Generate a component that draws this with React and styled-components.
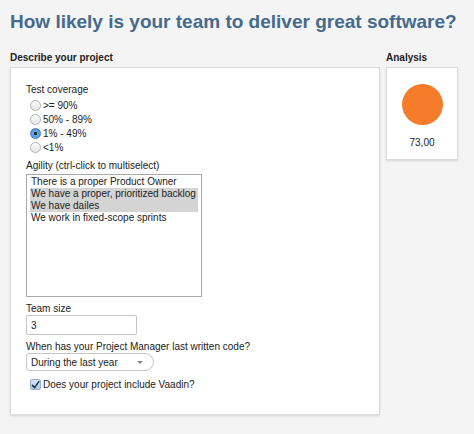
import React, { useState } from "react";
import styled, { createGlobalStyle } from "styled-components";

const GlobalStyle = createGlobalStyle`
  html, body {
    margin: 0;
    padding: 0;
    background: #f4f4f4;
    font-family: "Liberation Sans", Arial, Helvetica, sans-serif;
    color: #222;
  }
`;

const coverageOptions = [">= 90%", "50% - 89%", "1% - 49%", "<1%"];
const agilityOptions = [
  "There is a proper Product Owner",
  "We have a proper, prioritized backlog",
  "We have dailes",
  "We work in fixed-scope sprints",
];

const App = () => {
  const [coverage, setCoverage] = useState("1% - 49%");
  const [agility, setAgility] = useState([1, 2]);
  const [vaadin, setVaadin] = useState(true);

  const toggleAgility = (i) =>
    setAgility((prev) =>
      prev.includes(i) ? prev.filter((x) => x !== i) : [...prev, i]
    );

  return (
    <Page>
      <GlobalStyle />
      <Title>How likely is your team to deliver great software?</Title>
      <Columns>
        <FormColumn>
          <SectionTitle>Describe your project</SectionTitle>
          <Panel>
            <Field>
              <Label>Test coverage</Label>
              <RadioGroup>
                {coverageOptions.map((opt) => (
                  <RadioRow key={opt}>
                    <Radio
                      checked={coverage === opt}
                      onClick={() => setCoverage(opt)}
                    />
                    {opt}
                  </RadioRow>
                ))}
              </RadioGroup>
            </Field>

            <Field>
              <Label>Agility (ctrl-click to multiselect)</Label>
              <ListBox>
                {agilityOptions.map((opt, i) => (
                  <ListItem
                    key={opt}
                    $selected={agility.includes(i)}
                    onClick={() => toggleAgility(i)}
                  >
                    {opt}
                  </ListItem>
                ))}
              </ListBox>
            </Field>

            <Field>
              <Label $tight>Team size</Label>
              <TextInput defaultValue="3" />
            </Field>

            <Field>
              <Label $tight>When has your Project Manager last written code?</Label>
              <Combo>
                <span>During the last year</span>
                <Caret />
              </Combo>
            </Field>

            <CheckRow onClick={() => setVaadin(!vaadin)}>
              <CheckBox>
                {vaadin && (
                  <svg width="12" height="12" viewBox="0 0 12 12">
                    <path
                      d="M2 6.5 L4.8 9.5 L10.5 1.5"
                      fill="none"
                      stroke="#1f3550"
                      strokeWidth="2"
                      strokeLinecap="round"
                      strokeLinejoin="round"
                    />
                  </svg>
                )}
              </CheckBox>
              Does your project include Vaadin?
            </CheckRow>
          </Panel>
        </FormColumn>

        <AnalysisColumn>
          <SectionTitle>Analysis</SectionTitle>
          <AnalysisPanel>
            <Dot />
            <Score>73,00</Score>
          </AnalysisPanel>
        </AnalysisColumn>
      </Columns>
    </Page>
  );
};

export default App;

const Page = styled.div`
  padding: 9px 10px 19px 10px;
`;

const Title = styled.h1`
  margin: 0 0 17px 0;
  font-size: 19px;
  font-weight: bold;
  color: #466a8c;
  white-space: nowrap;
  line-height: 26px;
`;

const Columns = styled.div`
  display: flex;
  gap: 6px;
  align-items: flex-start;
`;

const FormColumn = styled.div`
  width: 370px;
`;

const AnalysisColumn = styled.div`
  width: 72px;
`;

const SectionTitle = styled.div`
  font-size: 10px;
  font-weight: bold;
  line-height: 12px;
  margin-bottom: 3px;
`;

const Panel = styled.div`
  background: #fff;
  border: 1px solid #dcdcdc;
  box-shadow: 0 1px 2px rgba(0, 0, 0, 0.12);
  padding: 16px 15px 22px 15px;
  height: 348px;
  box-sizing: border-box;
  display: flex;
  flex-direction: column;
  gap: 6px;
`;

const Field = styled.div`
  display: flex;
  flex-direction: column;
`;

const Label = styled.div`
  font-size: 10px;
  line-height: 12px;
  margin-bottom: ${(p) => (p.$tight ? "0" : "2px")};
`;

const RadioGroup = styled.div`
  display: flex;
  flex-direction: column;
  padding-left: 4px;
`;

const RadioRow = styled.label`
  display: flex;
  align-items: center;
  gap: 2px;
  font-size: 10px;
  height: 14px;
  cursor: pointer;
`;

const Radio = styled.span`
  width: 11px;
  height: 11px;
  border-radius: 50%;
  box-sizing: border-box;
  border: 1px solid #b4b4b4;
  background: ${(p) =>
    p.checked
      ? "radial-gradient(circle, #1c2f45 0 1.6px, #6fa8e6 2px, #3f86d8 100%)"
      : "linear-gradient(#fbfbfb, #e6e6e6)"};
  border-color: ${(p) => (p.checked ? "#4a7fbf" : "#b4b4b4")};
`;

const ListBox = styled.div`
  width: 176px;
  height: 123px;
  box-sizing: border-box;
  border: 1px solid #a9a9a9;
  padding: 1px 3px;
  background: #fff;
`;

const ListItem = styled.div`
  font-size: 10px;
  line-height: 12px;
  padding: 0 1px;
  background: ${(p) => (p.$selected ? "#d4d4d4" : "transparent")};
  cursor: default;
`;

const TextInput = styled.input`
  width: 111px;
  height: 20px;
  box-sizing: border-box;
  border: 1px solid #c4c4c4;
  border-radius: 2px;
  padding: 0 4px;
  font-family: inherit;
  font-size: 10px;
  color: #222;
  outline: none;
`;

const Combo = styled.div`
  width: 128px;
  height: 18px;
  box-sizing: border-box;
  border: 1px solid #c4c4c4;
  border-radius: 3px 9px 9px 3px;
  display: flex;
  align-items: center;
  justify-content: space-between;
  padding: 0 10px 0 4px;
  font-size: 10px;
  background: #fff;
`;

const Caret = styled.span`
  width: 0;
  height: 0;
  border-left: 3px solid transparent;
  border-right: 3px solid transparent;
  border-top: 3px solid #888;
`;

const CheckRow = styled.label`
  display: flex;
  align-items: center;
  gap: 2px;
  font-size: 10px;
  padding-left: 4px;
  margin-top: 2px;
  cursor: pointer;
`;

const CheckBox = styled.span`
  width: 11px;
  height: 11px;
  box-sizing: border-box;
  border: 1px solid #9ab2d0;
  border-radius: 2px;
  background: linear-gradient(#d6e6f8, #a9c8ec);
  display: flex;
  align-items: center;
  justify-content: center;
  overflow: visible;
`;

const AnalysisPanel = styled.div`
  background: #fff;
  border: 1px solid #dcdcdc;
  box-shadow: 0 1px 2px rgba(0, 0, 0, 0.12);
  height: 93px;
  box-sizing: border-box;
  display: flex;
  flex-direction: column;
  align-items: center;
  padding-top: 16px;
`;

const Dot = styled.div`
  width: 41px;
  height: 41px;
  border-radius: 50%;
  background: #f57c2b;
`;

const Score = styled.div`
  margin-top: 12px;
  font-size: 10px;
`;
